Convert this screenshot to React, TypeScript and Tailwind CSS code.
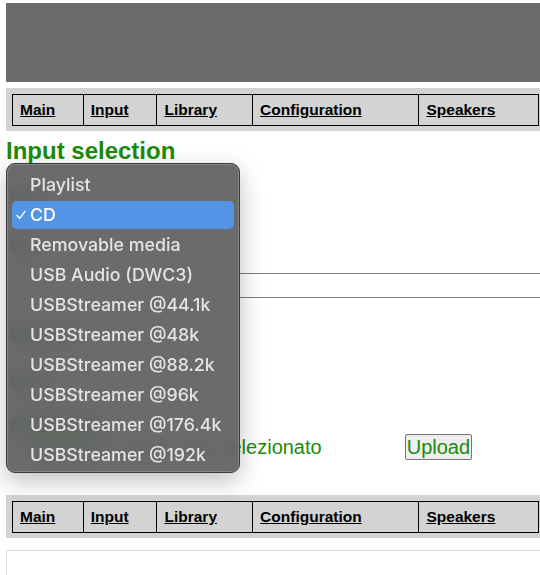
import { useState } from "react";

const navItems = [
  { label: "Main", w: "w-[70px]" },
  { label: "Input", w: "w-[74px]" },
  { label: "Library", w: "w-[96px]" },
  { label: "Configuration", w: "w-[167px]" },
  { label: "Speakers", w: "w-[120px]" },
];

const inputs = [
  "Playlist",
  "CD",
  "Removable media",
  "USB Audio (DWC3)",
  "USBStreamer @44.1k",
  "USBStreamer @48k",
  "USBStreamer @88.2k",
  "USBStreamer @96k",
  "USBStreamer @176.4k",
  "USBStreamer @192k",
];

function Nav() {
  return (
    <nav className="bg-[#d3d3d3] pt-[6px] pb-[5px] pl-[6px]">
      <div className="flex w-[527px] h-[32px] border border-black">
        {navItems.map((item, i) => (
          <a
            key={item.label}
            href="#"
            className={`${item.w} ${i > 0 ? "border-l border-black" : ""} flex items-center pl-[7px] text-[15.5px] font-bold text-black underline`}
          >
            {item.label}
          </a>
        ))}
      </div>
    </nav>
  );
}

function InputMenu({ selected }: { selected: string }) {
  return (
    <div className="absolute left-[6px] top-[163px] w-[234px] h-[310px] rounded-[9px] border border-[#3a3a3a] bg-[#5b5b5b]/90 backdrop-blur-md shadow-[inset_0_0_0_1px_rgba(255,255,255,0.18),0_8px_24px_rgba(0,0,0,0.25)] pt-[6px] font-['Inter',sans-serif] text-[17.8px] font-medium">
      {inputs.map((name) => {
        const active = name === selected;
        return (
          <div key={name} className="h-[30px] px-[5px] py-[1px]">
            <div
              className={`relative h-[28px] rounded-[5px] flex items-center pl-[18px] ${active ? "bg-[#5394e7] text-white" : "text-[#e4e4e4]"}`}
            >
              {active && (
                <svg className="absolute left-[4px] top-[9px]" width="10" height="10" viewBox="0 0 10 10">
                  <path d="M1 5.4 L3.8 8.4 L9 1.4" fill="none" stroke="white" strokeWidth="1.4" strokeLinecap="round" strokeLinejoin="round" />
                </svg>
              )}
              {name}
            </div>
          </div>
        );
      })}
    </div>
  );
}

// green blocks of page content that sit under the open menu
function Hidden({ w, mt }: { w: string; mt: string }) {
  return <div className={`${mt} ${w} h-[14px] ml-[4px] rounded-sm bg-[#1c8a0c]/70`} />;
}

export default function App() {
  const [selected] = useState("CD");
  return (
    <div className="relative w-[540px] h-[575px] overflow-hidden bg-white font-['Liberation_Sans',Arial,sans-serif]">
      <div className="w-[546px] ml-[6px] pt-[3px]">
        <div className="h-[79px] bg-[#6a6a6a]" />
        <div className="mt-[6px]">
          <Nav />
        </div>
        <h2 className="mt-[6px] text-[24px] leading-[27px] font-bold text-[#1c8a0c]">Input selection</h2>

        <Hidden mt="mt-[26px]" w="w-[34px]" />
        <Hidden mt="mt-[34px]" w="w-[30px]" />
        <div className="mt-[21px] border-t border-[#808080]" />
        <div className="mt-[23px] border-t border-[#808080]" />
        <Hidden mt="mt-[30px]" w="w-[70px]" />
        <Hidden mt="mt-[32px]" w="w-[40px]" />
        <Hidden mt="mt-[30px]" w="w-[90px]" />

        <div className="mt-[2px] flex items-center h-[26px]">
          <span className="ml-[20px] w-[76px] h-[20px] rounded-sm bg-[#1c8a0c]/40" />
          <span className="ml-[14px] text-[20px] leading-[22px] text-[#1c8a0c]">Nessun file selezionato</span>
          <button className="ml-[83px] h-[26px] px-[1px] border border-[#767676] rounded-[2px] bg-[#efefef] text-[20px] leading-[22px] text-[#1c8a0c]">
            Upload
          </button>
        </div>

        <div className="mt-[35px]">
          <Nav />
        </div>
        <div className="mt-[12px] h-[60px] border border-[#dcdcdc]" />
      </div>

      <InputMenu selected={selected} />
    </div>
  );
}
